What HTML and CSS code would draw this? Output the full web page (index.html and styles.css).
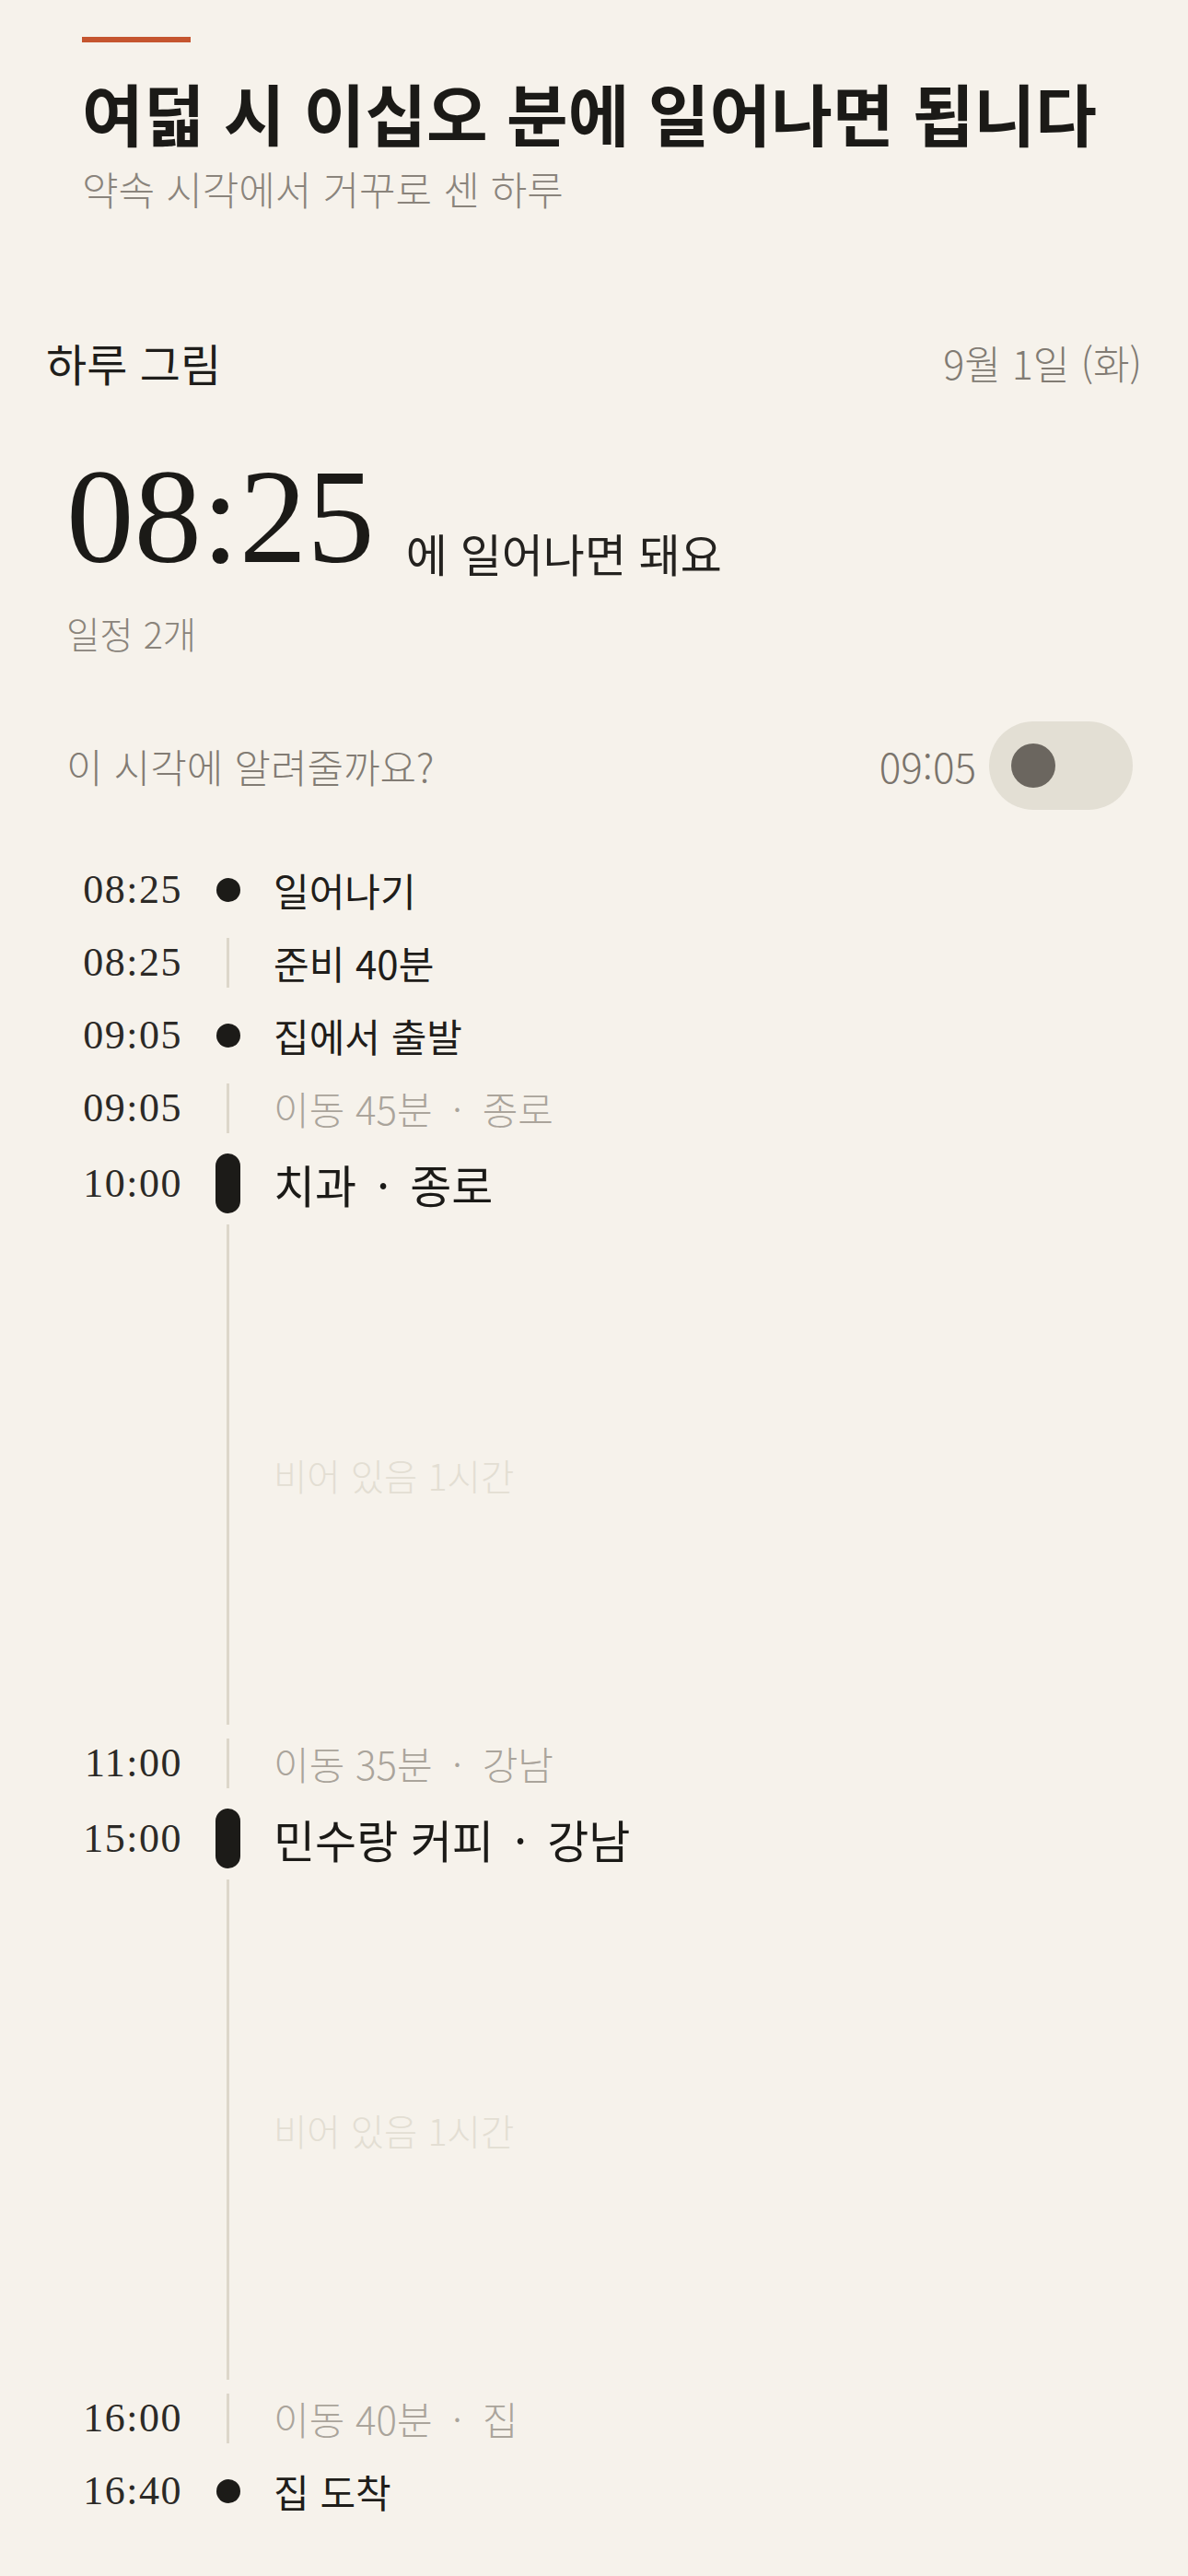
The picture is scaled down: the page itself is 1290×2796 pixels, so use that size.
FILE: index.html
```html
<!DOCTYPE html>
<html lang="ko">
<head>
<meta charset="utf-8">
<title>하루 그림</title>
<link rel="stylesheet" href="styles.css">
</head>
<body>
<main class="page">
  <header class="intro">
    <div class="accent"></div>
    <h1 class="headline">여덟 시 이십오 분에 일어나면 됩니다</h1>
    <p class="lede">약속 시각에서 거꾸로 센 하루</p>
  </header>

  <section class="day">
    <div class="day-head">
      <h2 class="day-title">하루 그림</h2>
      <span class="day-date">9월 1일 (화)</span>
    </div>

    <div class="wake">
      <div class="wake-line">
        <span class="wake-time">08:25</span>
        <span class="wake-note">에 일어나면 돼요</span>
      </div>
      <p class="wake-count">일정 2개</p>
    </div>

    <div class="alarm">
      <span class="alarm-label">이 시각에 알려줄까요?</span>
      <div class="alarm-control">
        <span class="alarm-time">09:05</span>
        <span class="switch" role="switch" aria-checked="false"><span class="knob"></span></span>
      </div>
    </div>

    <ol class="timeline">
      <li class="row">
        <span class="t">08:25</span>
        <span class="mark"><span class="dot"></span></span>
        <span class="label">일어나기</span>
      </li>
      <li class="row">
        <span class="t">08:25</span>
        <span class="mark"><span class="seg"></span></span>
        <span class="label">준비 40분</span>
      </li>
      <li class="row">
        <span class="t">09:05</span>
        <span class="mark"><span class="dot"></span></span>
        <span class="label">집에서 출발</span>
      </li>
      <li class="row">
        <span class="t">09:05</span>
        <span class="mark"><span class="seg"></span></span>
        <span class="label label-move">이동 45분<span class="sep">·</span>종로</span>
      </li>
      <li class="row row-event">
        <span class="t">10:00</span>
        <span class="mark"><span class="pill"></span></span>
        <span class="label label-event">치과<span class="sep">·</span>종로</span>
      </li>
      <li class="row row-gap">
        <span class="t"></span>
        <span class="mark"><span class="seg seg-long"></span></span>
        <span class="label label-empty">비어 있음 1시간</span>
      </li>
      <li class="row">
        <span class="t">11:00</span>
        <span class="mark"><span class="seg"></span></span>
        <span class="label label-move">이동 35분<span class="sep">·</span>강남</span>
      </li>
      <li class="row row-event">
        <span class="t">15:00</span>
        <span class="mark"><span class="pill"></span></span>
        <span class="label label-event">민수랑 커피<span class="sep">·</span>강남</span>
      </li>
      <li class="row row-gap">
        <span class="t"></span>
        <span class="mark"><span class="seg seg-long"></span></span>
        <span class="label label-empty">비어 있음 1시간</span>
      </li>
      <li class="row">
        <span class="t">16:00</span>
        <span class="mark"><span class="seg"></span></span>
        <span class="label label-move">이동 40분<span class="sep">·</span>집</span>
      </li>
      <li class="row">
        <span class="t">16:40</span>
        <span class="mark"><span class="dot"></span></span>
        <span class="label">집 도착</span>
      </li>
    </ol>
  </section>
</main>
</body>
</html>
```

FILE: styles.css
```css
* {
  box-sizing: border-box;
}

html, body {
  margin: 0;
  padding: 0;
  background: #f6f2eb;
}

body {
  font-family: "Noto Sans CJK KR", "Noto Sans", sans-serif;
  color: #1d1c19;
}

.page {
  width: 1290px;
  min-height: 2796px;
  padding-bottom: 52px;
}

/* intro */
.intro {
  padding: 40px 89px 0;
}

.accent {
  width: 118px;
  height: 6px;
  background: #c5552f;
}

.headline {
  margin: 33px 0 0;
  font-size: 72.5px;
  line-height: 86px;
  font-weight: 700;
  letter-spacing: 0;
  color: #1b1a17;
  white-space: nowrap;
}

.lede {
  margin: 14px 0 0;
  font-size: 43px;
  line-height: 50px;
  font-weight: 300;
  color: #8a847c;
}

/* day section */
.day {
  margin-top: 136px;
}

.day-head {
  display: flex;
  justify-content: space-between;
  align-items: center;
  padding: 0 50px;
  height: 56px;
}

.day-title {
  margin: 0;
  font-size: 48px;
  line-height: 56px;
  font-weight: 400;
  color: #1f1e1b;
}

.day-date {
  font-size: 43px;
  line-height: 56px;
  font-weight: 300;
  color: #817b73;
}

.wake {
  padding: 65px 72px 0;
}

.wake-line {
  display: flex;
  align-items: flex-end;
}

.wake-time {
  font-family: "Liberation Serif", "Noto Sans CJK KR", serif;
  font-size: 147px;
  line-height: 150px;
  color: #1b1a17;
}

.wake-note {
  margin-left: 34px;
  font-size: 49px;
  line-height: 72px;
  font-weight: 400;
  color: #24221f;
}

.wake-count {
  margin: 28px 0 0;
  font-size: 39.5px;
  line-height: 46px;
  font-weight: 300;
  color: #8a847b;
}

/* alarm */
.alarm {
  margin-top: 73px;
  padding: 0 60px 0 72px;
  height: 96px;
  display: flex;
  align-items: center;
  justify-content: space-between;
}

.alarm-label {
  font-size: 43px;
  font-weight: 300;
  color: #827c74;
}

.alarm-control {
  display: flex;
  align-items: center;
  gap: 14px;
}

.alarm-time {
  font-size: 44px;
  font-weight: 300;
  color: #7a746c;
}

.switch {
  display: flex;
  align-items: center;
  width: 156px;
  height: 96px;
  padding: 0 24px;
  border-radius: 48px;
  background: #e3dfd4;
}

.knob {
  width: 48px;
  height: 48px;
  border-radius: 50%;
  background: #6b665f;
}

/* timeline */
.timeline {
  list-style: none;
  margin: 47px 0 0;
  padding: 0 0 0 72px;
}

.row {
  display: grid;
  grid-template-columns: 126px 99px 1fr;
  align-items: center;
  height: 79px;
}

.row-event {
  height: 85px;
}

.row-gap {
  height: 547px;
}

.t {
  text-align: right;
  font-family: "Liberation Serif", "Noto Sans CJK KR", serif;
  font-size: 44px;
  letter-spacing: 1.5px;
  color: #2b2926;
}

.mark {
  display: flex;
  justify-content: center;
  align-items: center;
  align-self: stretch;
}

.dot {
  width: 26px;
  height: 26px;
  border-radius: 50%;
  background: #1c1b18;
}

.seg {
  width: 3px;
  height: 54px;
  background: #ddd7ca;
}

.seg-long {
  height: 543px;
}

.pill {
  width: 27px;
  height: 65px;
  border-radius: 14px;
  background: #1c1b18;
}

.label {
  font-size: 42px;
  font-weight: 400;
  color: #1f1d1a;
  white-space: nowrap;
}

.sep {
  display: inline-block;
  width: 54px;
  text-align: center;
}

.label-move {
  font-weight: 300;
  color: #aaa49b;
}

.label-event {
  font-size: 49px;
  color: #1b1a17;
}

.label-event .sep {
  width: 58px;
}

.label-empty {
  font-size: 39.5px;
  font-weight: 300;
  color: #e3ded3;
}
```
